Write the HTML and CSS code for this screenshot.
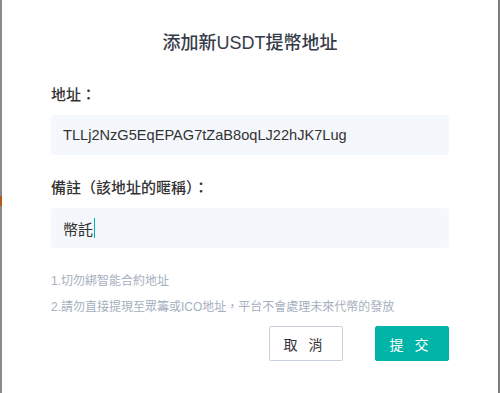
FILE: index.html
```html
<!DOCTYPE html>
<html lang="zh-Hant">
	<head>
		<meta charset="UTF-8" />
		<meta name="viewport" content="width=device-width, initial-scale=1.0" />
		<title>添加新USDT提幣地址</title>
		<link rel="stylesheet" href="styles.css">
	</head>
	<body>
		<div class="modal">
			<h1 class="title">添加新USDT提幣地址</h1>
			<div class="field">
				<label class="label">地址：</label>
				<div class="input input-address">TLLj2NzG5EqEPAG7tZaB8oqLJ22hJK7Lug</div>
			</div>
			<div class="field">
				<label class="label">備註（該地址的暱稱）：</label>
				<div class="input">幣託<span class="caret"></span></div>
			</div>
			<div class="notes">
				<p>1.切勿綁智能合約地址</p>
				<p>2.請勿直接提現至眾籌或ICO地址，平台不會處理未來代幣的發放</p>
			</div>
			<div class="actions">
				<button class="btn btn-cancel">取 消</button>
				<button class="btn btn-submit">提 交</button>
			</div>
		</div>
	</body>
</html>
```

FILE: styles.css
```css
* {
	box-sizing: border-box;
}
body {
	margin: 0;
	padding: 0;
	height: 393px;
	overflow: hidden;
	font-family: "Liberation Sans", "Noto Sans CJK TC", sans-serif;
	/* page behind the mask, only a sliver shows on the left */
	background-color: #7d7d7d;
	background-image: linear-gradient(
		to bottom,
		#8a8a8a 0,
		#8a8a8a 196px,
		#b4581c 196px,
		#b4581c 206px,
		#8a8a8a 206px
	);
	background-size: 2px 100%;
	background-repeat: no-repeat;
	color: #333;
}
.modal {
	width: 496px;
	height: 393px;
	margin-left: 2px;
	background-color: #fff;
	padding: 31px 49px 0;
}
.title {
	margin: 0;
	font-size: 18px;
	line-height: 24px;
	font-weight: 500;
	text-align: center;
	color: #363b48;
}
.field {
	margin-top: 30px;
}
.field + .field {
	margin-top: 23px;
}
.label {
	display: block;
	font-size: 15px;
	line-height: 20px;
	font-weight: 500;
	color: #333;
	margin-bottom: 10px;
}
.input {
	display: flex;
	align-items: center;
	height: 40px;
	padding: 0 12px;
	background-color: #f4f7fb;
	border-radius: 4px;
	font-size: 15px;
	color: #333;
}
.input-address {
	font-size: 14.6px;
}
.caret {
	display: inline-block;
	width: 1px;
	height: 20px;
	margin-left: 1px;
	background-color: #00b3a6;
}
.notes {
	margin-top: 20px;
}
.notes p {
	margin: 0;
	font-size: 12px;
	line-height: 26px;
	color: #a5afbe;
}
.actions {
	display: flex;
	justify-content: flex-end;
	gap: 32px;
	margin-top: 6px;
}
.btn {
	width: 74px;
	height: 35px;
	border-radius: 2px;
	font-family: "Noto Sans CJK TC", sans-serif;
	font-size: 14px;
	letter-spacing: 4px;
	padding-left: 4px;
	cursor: pointer;
}
.btn-cancel {
	background-color: #fff;
	border: 1px solid #c9d1dc;
	color: #333;
}
.btn-submit {
	background-color: #00b4a7;
	border: 1px solid #00b4a7;
	color: #fff;
}
```
